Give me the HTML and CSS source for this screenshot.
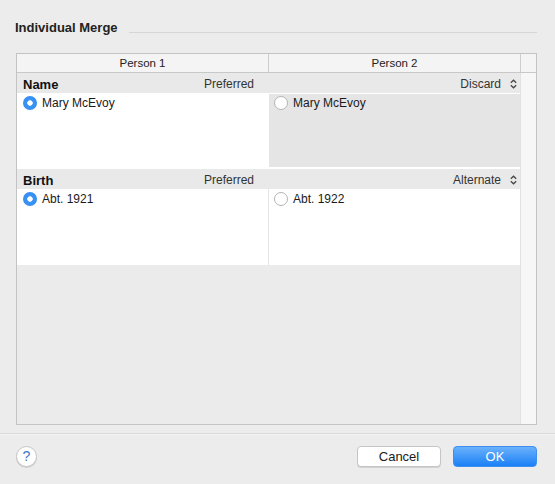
FILE: index.html
```html
<!DOCTYPE html>
<html>
<head>
<meta charset="utf-8">
<link rel="stylesheet" href="styles.css">
</head>
<body>
<div class="dialog">
  <div class="title-row">
    <div class="title">Individual Merge</div>
    <div class="rule"></div>
  </div>
  <div class="table">
    <div class="thead">
      <div class="th c1">Person 1</div>
      <div class="th c2">Person 2</div>
      <div class="th sc"></div>
    </div>
    <div class="tbody">
      <div class="main">
        <div class="section">
          <div class="sec-head">
            <div class="sh c1"><span class="field">Name</span><span class="status">Preferred</span></div>
            <div class="sh c2"><span class="status">Discard</span><svg class="updown" width="7" height="10" viewBox="0 0 7 10"><path d="M0.8 3.8 L3.5 1.2 L6.2 3.8 M0.8 6.2 L3.5 8.8 L6.2 6.2" fill="none" stroke="#444" stroke-width="1.2"/></svg></div>
          </div>
          <div class="sec-body">
            <div class="cell c1"><span class="radio on"></span><span class="val">Mary McEvoy</span></div>
            <div class="cell c2 discard"><span class="radio"></span><span class="val">Mary McEvoy</span></div>
          </div>
        </div>
        <div class="section">
          <div class="sec-head">
            <div class="sh c1"><span class="field">Birth</span><span class="status">Preferred</span></div>
            <div class="sh c2"><span class="status">Alternate</span><svg class="updown" width="7" height="10" viewBox="0 0 7 10"><path d="M0.8 3.8 L3.5 1.2 L6.2 3.8 M0.8 6.2 L3.5 8.8 L6.2 6.2" fill="none" stroke="#444" stroke-width="1.2"/></svg></div>
          </div>
          <div class="sec-body">
            <div class="cell c1"><span class="radio on"></span><span class="val">Abt. 1921</span></div>
            <div class="cell c2 alt"><span class="radio"></span><span class="val">Abt. 1922</span></div>
          </div>
        </div>
      </div>
      <div class="scroll"></div>
    </div>
  </div>
  <div class="separator"></div>
  <div class="footer">
    <div class="help">?</div>
    <div class="buttons">
      <div class="btn cancel">Cancel</div>
      <div class="btn ok">OK</div>
    </div>
  </div>
</div>
</body>
</html>
```
FILE: styles.css
```css
html, body {
  margin: 0;
  padding: 0;
  background: #ececec;
}
body {
  font-family: "Liberation Sans", Arial, sans-serif;
  color: #1a1a1a;
  width: 555px;
  height: 484px;
  overflow: hidden;
}
.dialog {
  display: flex;
  flex-direction: column;
}
.title-row {
  display: flex;
  padding: 20px 18px 0 15px;
  height: 16px;
}
.title {
  font-weight: bold;
  font-size: 13px;
  line-height: 16px;
  color: #222;
}
.rule {
  flex: 1;
  height: 1px;
  background: #d6d6d6;
  margin-top: 12px;
  margin-left: 11px;
}
.table {
  margin: 17px 0 0 16px;
  width: 519px;
  height: 370px;
  border: 1px solid #c3c3c3;
  background: #ebebeb;
  display: flex;
  flex-direction: column;
}
.thead {
  display: flex;
  height: 18px;
  border-bottom: 1px solid #c8c8c8;
  background: #f4f4f4;
}
.th {
  font-size: 11.5px;
  line-height: 19px;
  text-align: center;
  color: #222;
}
.thead .c1 { width: 251px; border-right: 1px solid #cdcdcd; }
.thead .c2 { width: 251px; border-right: 1px solid #cdcdcd; }
.thead .sc { flex: 1; }
.tbody {
  flex: 1;
  display: flex;
}
.main {
  width: 503px;
  display: flex;
  flex-direction: column;
}
.scroll {
  flex: 1;
  background: #f7f7f7;
  border-left: 1px solid #e2e2e2;
}
.sec-head {
  display: flex;
  height: 20px;
  background: #e9e9e9;
}
.sh {
  display: flex;
  align-items: center;
  font-size: 12px;
  color: #333;
  padding-top: 2px;
  box-sizing: border-box;
}
.sh.c1 {
  width: 251px;
  padding-left: 6px;
  padding-right: 14px;
  justify-content: space-between;
}
.sh.c2 {
  flex: 1;
  justify-content: flex-end;
  padding-right: 3px;
  gap: 9px;
}
.field {
  font-weight: bold;
  font-size: 13px;
  color: #111;
}
.updown { display: block; }
.sec-body {
  display: flex;
  height: 76px;
  background: #fff;
}
.cell {
  display: flex;
  align-items: center;
  align-self: flex-start;
  font-size: 12px;
  color: #1a1a1a;
  gap: 5px;
}
.sec-body .c1 {
  width: 251px;
  padding: 3px 0 0 6px;
  box-sizing: border-box;
}
.sec-body .c2 {
  flex: 1;
  align-self: stretch;
  align-items: flex-start;
  border-left: 1px solid #e4e4e4;
  padding: 3px 0 0 5px;
}
.sec-body .c2.discard {
  border-left-color: #fff;
  background: #e5e5e5;
  margin: 1px 0 2px 0;
  padding-top: 2px;
}
.cell .val { line-height: 14px; }
.radio {
  width: 14px;
  height: 14px;
  box-sizing: border-box;
  border-radius: 50%;
  border: 1px solid #b5b5b5;
  background: #fff;
  flex: none;
}
.radio.on {
  border: none;
  background: radial-gradient(circle, #fff 0, #fff 2.4px, #3b94f5 3px, #2f87ee 100%);
}
.separator {
  margin-top: 8px;
  height: 1px;
  background: #d9d9d9;
  border-bottom: 1px solid #f4f4f4;
}
.footer {
  display: flex;
  justify-content: space-between;
  align-items: center;
  padding: 11px 18px 0 16px;
}
.help {
  width: 21px;
  height: 21px;
  box-sizing: border-box;
  border-radius: 50%;
  border: 1px solid #c6c6c6;
  background: #fff;
  color: #3f78c8;
  font-size: 14px;
  line-height: 19px;
  text-align: center;
  box-shadow: 0 1px 0 #d0d0d0;
}
.buttons {
  display: flex;
  gap: 12px;
}
.btn {
  width: 84px;
  height: 21px;
  box-sizing: border-box;
  border-radius: 4px;
  font-size: 13px;
  line-height: 19px;
  text-align: center;
}
.cancel {
  background: #fff;
  border: 1px solid #c5c5c5;
  color: #1a1a1a;
  box-shadow: 0 1px 0 #d2d2d2;
}
.ok {
  background: linear-gradient(#6ab1fb, #1a80f6);
  border: 1px solid #3f8ff0;
  color: #fff;
}
```
